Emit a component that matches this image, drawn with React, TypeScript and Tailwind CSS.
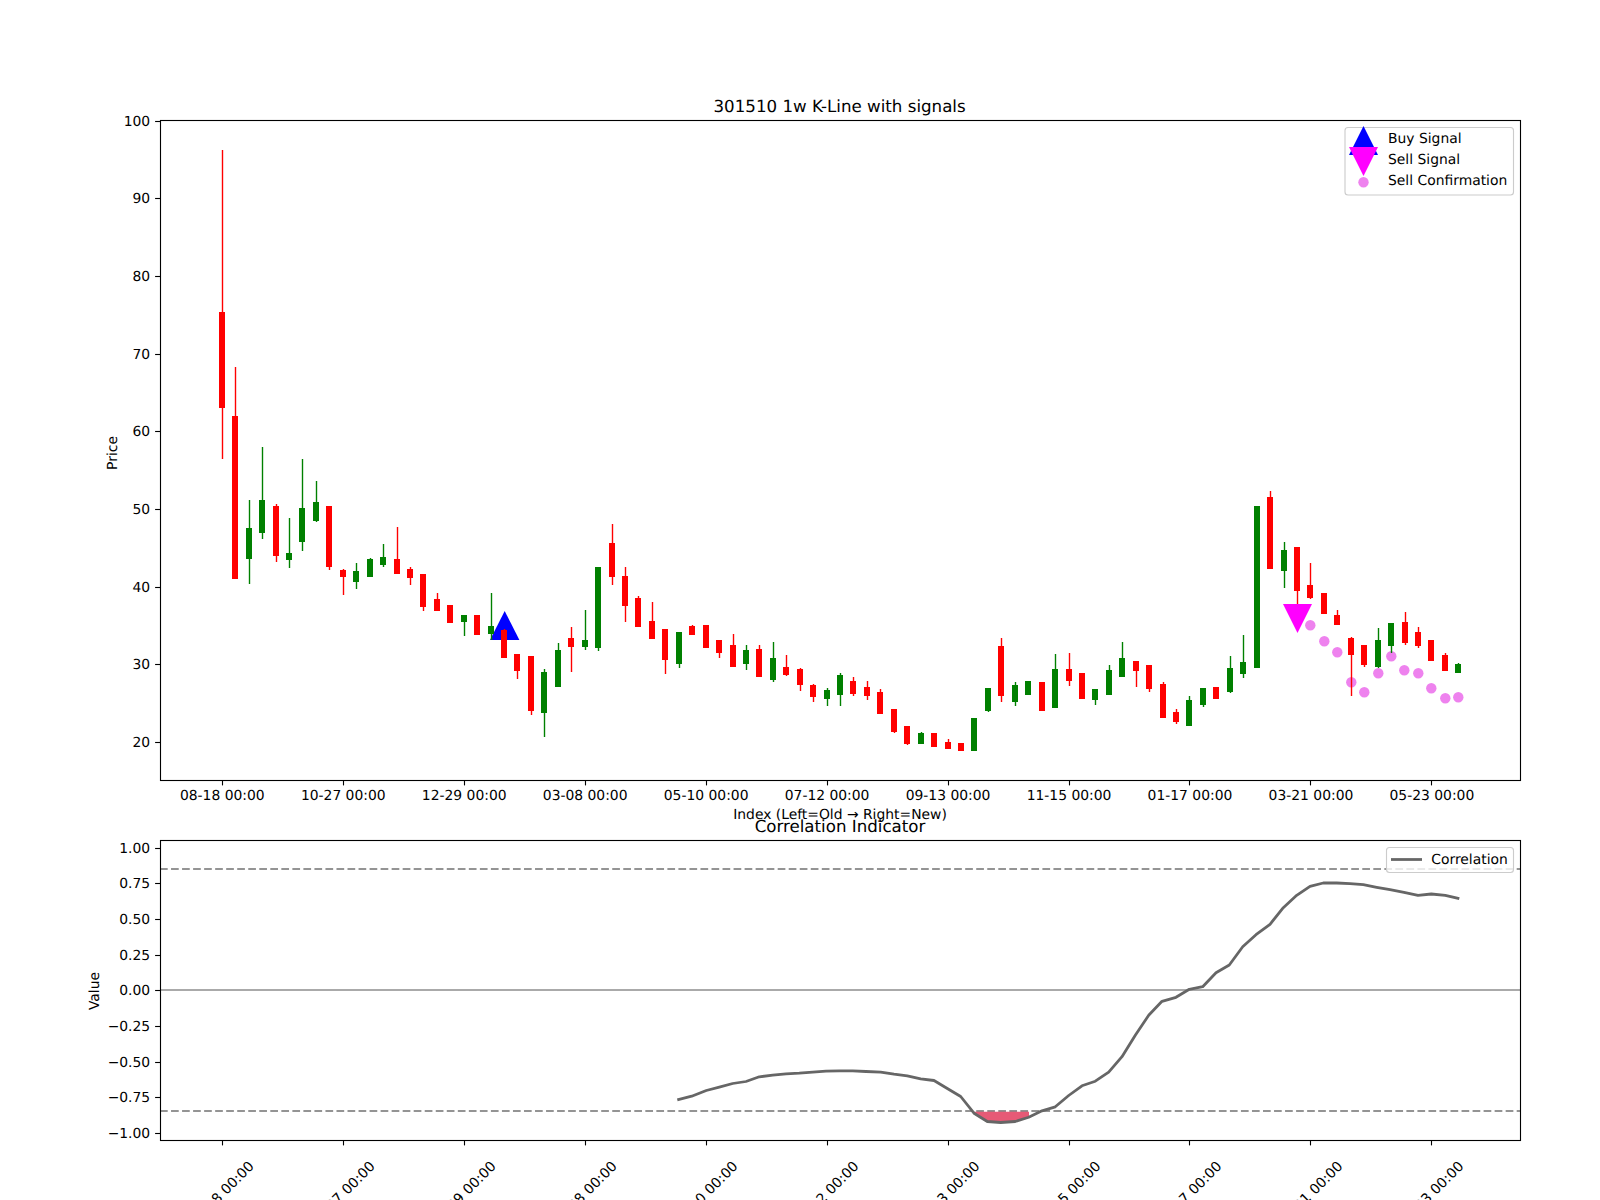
const X0 = 222.3;
const DX = 13.44;
const xOf = (i: number) => X0 + DX * i;

// [wickTop, bodyTop, bodyBottom, wickBottom, colour]
const candles: [number, number, number, number, "r" | "g"][] = [
  [150, 312, 408, 459, "r"], [367, 416, 579, 579, "r"], [500, 528, 559, 584, "g"], [447, 500, 533, 539, "g"],
  [504, 506, 556, 562, "r"], [518, 553, 560, 568, "g"], [459, 508, 542, 551, "g"], [481, 502, 521, 522, "g"],
  [506, 506, 567, 570, "r"], [569, 570, 577, 595, "r"], [563, 571, 582, 589, "g"], [558, 559, 577, 577, "g"],
  [544, 557, 565, 567, "g"], [527, 559, 574, 574, "r"], [567, 569, 578, 585, "r"], [574, 574, 607, 611, "r"],
  [593, 599, 611, 611, "r"], [605, 605, 623, 623, "r"], [615, 615, 622, 636, "g"], [615, 615, 635, 635, "r"],
  [593, 626, 634, 640, "g"], [629, 630, 658, 658, "r"], [654, 654, 671, 679, "r"], [656, 656, 711, 715, "r"],
  [669, 672, 713, 737, "g"], [643, 650, 687, 687, "g"], [627, 638, 647, 672, "r"], [610, 640, 647, 650, "g"],
  [567, 567, 648, 651, "g"], [524, 543, 577, 585, "r"], [567, 576, 606, 622, "r"], [596, 598, 627, 627, "r"],
  [602, 621, 639, 639, "r"], [629, 629, 660, 674, "r"], [632, 632, 664, 668, "g"], [625, 626, 635, 635, "r"],
  [625, 625, 648, 648, "r"], [640, 640, 653, 658, "r"], [634, 645, 667, 667, "r"], [645, 650, 664, 670, "g"],
  [645, 649, 677, 677, "r"], [642, 658, 680, 682, "g"], [655, 667, 675, 676, "r"], [668, 669, 685, 691, "r"],
  [684, 685, 697, 702, "r"], [688, 690, 699, 706, "g"], [673, 675, 695, 706, "g"], [677, 681, 694, 696, "r"],
  [681, 687, 696, 700, "r"], [689, 692, 714, 714, "r"], [709, 709, 732, 733, "r"], [726, 726, 744, 745, "r"],
  [732, 733, 744, 744, "g"], [733, 733, 747, 747, "r"], [739, 742, 749, 749, "r"], [743, 743, 751, 751, "r"],
  [718, 718, 751, 751, "g"], [688, 688, 711, 712, "g"], [638, 646, 696, 702, "r"], [682, 685, 702, 706, "g"],
  [681, 681, 695, 695, "g"], [682, 682, 711, 711, "r"], [654, 669, 708, 708, "g"], [653, 669, 681, 686, "r"],
  [673, 673, 699, 699, "r"], [689, 689, 700, 705, "g"], [665, 670, 695, 695, "g"], [642, 658, 677, 677, "g"],
  [661, 661, 671, 687, "r"], [665, 665, 689, 692, "r"], [682, 684, 718, 718, "r"], [709, 712, 722, 724, "r"],
  [696, 700, 726, 726, "g"], [688, 688, 705, 707, "g"], [687, 687, 699, 699, "r"], [656, 668, 692, 693, "g"],
  [635, 662, 674, 678, "g"], [506, 506, 668, 668, "g"], [491, 497, 569, 569, "r"], [542, 550, 571, 588, "g"],
  [547, 547, 591, 604, "r"], [563, 585, 598, 599, "r"], [593, 593, 614, 614, "r"], [610, 615, 625, 625, "r"],
  [637, 638, 655, 696, "r"], [645, 645, 665, 667, "r"], [628, 640, 667, 668, "g"], [623, 623, 646, 653, "g"],
  [612, 622, 643, 645, "r"], [627, 632, 646, 648, "r"], [640, 640, 661, 661, "r"], [653, 655, 671, 671, "r"],
  [663, 664, 673, 673, "g"],
];

const dots: [number, number][] = [
  [1310.3, 625.3], [1324.3, 641.3], [1337.3, 652.3], [1351.3, 682.3], [1364.3, 692.3], [1378.3, 673.3],
  [1391.3, 656.3], [1404.3, 670.3], [1418.3, 673.3], [1431.3, 688.3], [1445.3, 698.3], [1458.3, 697.3],
];

const tickIdx = [0, 9, 18, 27, 36, 45, 54, 63, 72, 81, 90];
const tickDates = ["08-18 00:00", "10-27 00:00", "12-29 00:00", "03-08 00:00", "05-10 00:00", "07-12 00:00", "09-13 00:00", "11-15 00:00", "01-17 00:00", "03-21 00:00", "05-23 00:00"];
const priceTicks = [20, 30, 40, 50, 60, 70, 80, 90, 100];
const priceY = (p: number) => 120.5 + (100 - p) * 7.77;
const corrTicks = ["1.00", "0.75", "0.50", "0.25", "0.00", "−0.25", "−0.50", "−0.75", "−1.00"];
const corrY = (v: number) => 990.3 - 142.7 * v;

const z7: [number, number][] = [
  [112, 178], [155, 167], [199, 150], [238, 140], [278, 129], [318, 123], [358, 109], [398, 104], [438, 100],
  [478, 98], [518, 95], [558, 92], [598, 91], [638, 91], [678, 93], [722, 95], [762, 101], [802, 106], [842, 115],
  [882, 120], [922, 144], [962, 168], [1002, 218], [1042, 243], [1082, 246], [1126, 243], [1166, 230], [1206, 211],
  [1246, 199], [1286, 165], [1326, 136], [1366, 122], [1406, 95],
];
const z8: [number, number][] = [
  [246, 710], [286, 646], [326, 586], [366, 544], [408, 532], [448, 508], [488, 500], [528, 458], [568, 435],
  [608, 380], [648, 344], [690, 313], [730, 263], [770, 226], [810, 199], [850, 189], [890, 189], [930, 191],
  [970, 194], [1010, 202], [1050, 209], [1092, 217], [1134, 226], [1174, 222], [1216, 226], [1258, 236],
];
const corrLine = [
  ...z7.map(([x, y]) => `${(640 + x / 3).toFixed(1)},${(1040.5 + y / 3).toFixed(1)}`),
  ...z8.map(([x, y]) => `${(1040 + x / 3).toFixed(1)},${(820 + y / 3).toFixed(1)}`),
].join(" ");
const fillPts = ([[1002, 215], [1167, 215], [1167, 230], [1126, 243], [1082, 246], [1042, 243], [1002, 218]] as [number, number][])
  .map(([x, y]) => `${(640 + x / 3).toFixed(1)},${(1040 + y / 3).toFixed(1)}`)
  .join(" ");

function Frame({ y, h }: { y: number; h: number }) {
  return <rect x={160.5} y={y} width={1360} height={h} fill="none" stroke="#000" strokeWidth={1.11} />;
}

function XTicks({ y }: { y: number }) {
  return (
    <>
      {tickIdx.map((i) => (
        <line key={i} x1={Math.floor(xOf(i)) + 0.5} x2={Math.floor(xOf(i)) + 0.5} y1={y} y2={y + 4.9} stroke="#000" strokeWidth={1.11} />
      ))}
    </>
  );
}

function YTick({ y, label }: { y: number; label: string }) {
  return (
    <g>
      <line x1={155.1} x2={160} y1={y} y2={y} stroke="#000" strokeWidth={1.11} />
      <text x={150.2} y={y + 4.8} textAnchor="end">{label}</text>
    </g>
  );
}

export default function App() {
  return (
    <div className="flex h-[1200px] w-[1600px] flex-col overflow-hidden bg-white font-['DejaVu_Sans',sans-serif] text-[13.89px] text-black [text-rendering:geometricPrecision]">
      <svg className="h-[820px] w-[1600px] shrink-0 overflow-visible" viewBox="0 0 1600 820">
        <text x={839.6} y={112} textAnchor="middle" className="text-[16.67px]">301510 1w K-Line with signals</text>
        <XTicks y={780.5} />
        {tickIdx.map((i, k) => (
          <text key={i} x={xOf(i)} y={800} textAnchor="middle">{tickDates[k]}</text>
        ))}
        <text x={840} y={819} textAnchor="middle">Index (Left=Old → Right=New)</text>
        <text x={0} y={0} textAnchor="middle" transform="translate(117 453) rotate(-90)">Price</text>
        {priceTicks.map((p) => (
          <YTick key={p} y={Math.round(priceY(p)) + 0.5} label={String(p)} />
        ))}

        {dots.map(([cx, cy]) => (
          <circle key={cx} cx={cx} cy={cy} r={5.2} fill="#ee82ee" />
        ))}
        <polygon points="504.7,611 519.4,640 490,640" fill="#0000ff" />
        <polygon points="1283,604 1312,604 1297.5,633" fill="#ff00ff" />

        {candles.map(([wt, bt, bb, wb, c], i) => {
          const col = c === "r" ? "#ff0000" : "#008000";
          const x = xOf(i);
          const wx = Math.floor(x) + 0.5;
          return (
            <g key={i}>
              <line x1={wx} x2={wx} y1={wt} y2={wb} stroke={col} strokeWidth={1.39} />
              <rect x={Math.floor(x - 3)} y={bt} width={6} height={bb - bt} fill={col} shapeRendering="crispEdges" />
            </g>
          );
        })}

        <Frame y={120.5} h={660} />

        <rect x={1345} y={127.5} width={168.5} height={67.5} rx={3} fill="#fff" fillOpacity={0.8} stroke="#cccccc" strokeWidth={1.11} />
        <polygon points="1363.5,126 1378,155 1349,155" fill="#0000ff" />
        <polygon points="1349,147 1378,147 1363.5,176" fill="#ff00ff" />
        <circle cx={1363.5} cy={182.3} r={5.2} fill="#ee82ee" />
        <text x={1388} y={143.3}>Buy Signal</text>
        <text x={1388} y={164.3}>Sell Signal</text>
        <text x={1388} y={185.3}>Sell Confirmation</text>
      </svg>

      <svg className="h-[380px] w-[1600px] shrink-0 overflow-visible" viewBox="0 820 1600 380">
        <text x={840} y={832} textAnchor="middle" className="text-[16.67px]">Correlation Indicator</text>
        <XTicks y={1140.5} />
        {tickIdx.map((i, k) => (
          <text key={i} x={xOf(i) - 1} y={1198.5} textAnchor="middle" transform={`rotate(-45 ${xOf(i) - 1} 1193.5)`}>{tickDates[k]}</text>
        ))}
        <text x={0} y={0} textAnchor="middle" transform="translate(99 991) rotate(-90)">Value</text>
        {corrTicks.map((t, k) => (
          <YTick key={t} y={Math.round(corrY(1 - k * 0.25)) + 0.5} label={t} />
        ))}

        <line x1={160} x2={1520} y1={869} y2={869} stroke="#000" strokeOpacity={0.42} strokeWidth={2.08} strokeDasharray="7.7 3.33" />
        <line x1={160} x2={1520} y1={1111} y2={1111} stroke="#000" strokeOpacity={0.42} strokeWidth={2.08} strokeDasharray="7.7 3.33" />
        <line x1={160} x2={1520} y1={990} y2={990} stroke="#aaaaaa" strokeWidth={2.08} />
        <polygon points={fillPts} fill="#dc143c" fillOpacity={0.7} />
        <polyline points={corrLine} fill="none" stroke="#666666" strokeWidth={2.78} strokeLinejoin="round" />

        <Frame y={840.5} h={300} />

        <rect x={1386.5} y={847.5} width={127} height={25} rx={3} fill="#fff" fillOpacity={0.8} stroke="#cccccc" strokeWidth={1.11} />
        <line x1={1391} x2={1422} y1={859.5} y2={859.5} stroke="#666666" strokeWidth={2.78} />
        <text x={1431.3} y={864.3}>Correlation</text>
      </svg>
    </div>
  );
}
